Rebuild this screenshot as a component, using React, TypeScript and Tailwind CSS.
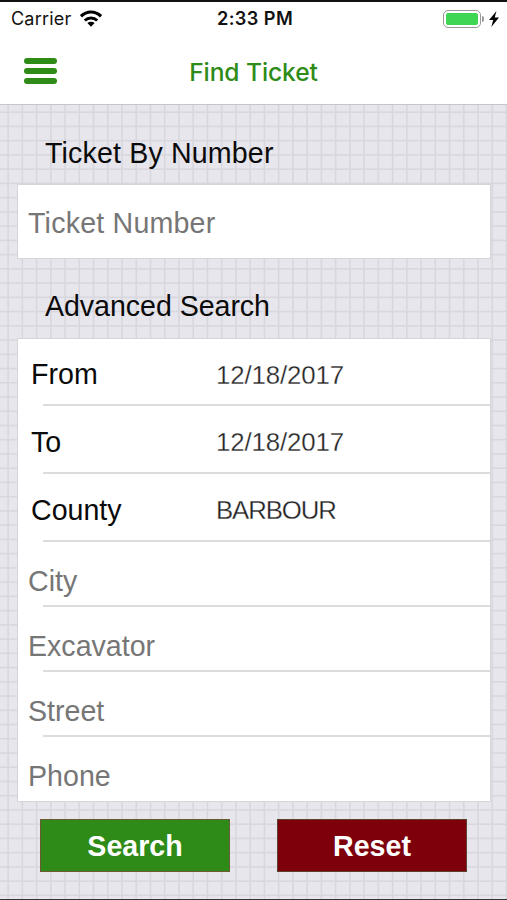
const pickers = [
  { label: 'From', value: '12/18/2017', height: 'h-[67px]', tracking: 'tracking-[-0.1px]' },
  { label: 'To', value: '12/18/2017', height: 'h-[68px]', tracking: 'tracking-[-0.1px]' },
  { label: 'County', value: 'BARBOUR', height: 'h-[68px]', tracking: 'tracking-[-1.1px]' },
]

const fields = [
  { label: 'City', height: 'h-[65px]' },
  { label: 'Excavator', height: 'h-[65px]' },
  { label: 'Street', height: 'h-[65px]' },
  { label: 'Phone', height: 'h-[64px]' },
]

const divider =
  "relative after:absolute after:bottom-0 after:right-0 after:left-[25px] after:h-[2px] after:bg-[#dcdcde] after:content-[''] last:after:hidden"

function StatusBar() {
  return (
    <div className="grid h-[33px] grid-cols-3 items-center pr-2 pl-[11px] font-[Inter,sans-serif] text-[#111]">
      <div className="flex items-center gap-[9px]">
        <span className="text-[18px] tracking-[0.2px]">Carrier</span>
        <svg width="22" height="17" viewBox="0 0 23 17" fill="none" stroke="#000" strokeWidth="3.2">
          <path d="M1 6.2C7 .3 16 .3 22 6.2" />
          <path d="M5 10.6c3.8-3.6 9.2-3.6 13 0" />
          <path d="M11.5 17 7.7 13.2c2.1-1.8 5.5-1.8 7.6 0z" fill="#000" stroke="none" />
        </svg>
      </div>
      <span className="text-center text-[18.2px] font-semibold tracking-[0.4px] whitespace-nowrap">2:33 PM</span>
      <div className="flex items-center justify-end">
        <div className="h-[18px] w-[38px] rounded-[5px] border-[1.5px] border-[#999] p-[2px]">
          <div className="h-full rounded-[2px] bg-[#3fd653]" />
        </div>
        <div className="ml-px h-[6px] w-[2px] rounded-r-full bg-[#999]" />
        <svg className="ml-[5px]" width="10" height="16" viewBox="0 0 10 16">
          <path d="M7.5 0 0 9h4.2L2.3 16 10 6.5H5.7z" fill="#000" />
        </svg>
      </div>
    </div>
  )
}

function Header() {
  return (
    <div className="grid flex-1 grid-cols-[1fr_auto_1fr] items-center pt-[3px]">
      <button className="ml-6 flex w-[33px] flex-col gap-[4px]" aria-label="Menu">
        <span className="h-[6px] w-full rounded-full bg-[#2f8b17]" />
        <span className="h-[6px] w-full rounded-full bg-[#2f8b17]" />
        <span className="h-[6px] w-full rounded-full bg-[#2f8b17]" />
      </button>
      <h1 className="pt-[3px] font-[Inter,sans-serif] text-[24.6px] font-medium tracking-[-0.1px] text-[#2f8b17]">
        Find Ticket
      </h1>
    </div>
  )
}

export default function App() {
  return (
    <div className="flex h-[900px] w-[507px] flex-col overflow-hidden border-t-2 border-b border-t-[#111] border-b-[#333] bg-[#e7e6ed] font-['Liberation_Sans',Arial,sans-serif] text-[28.6px] leading-none text-[#0a0a0a]">
      <div className="flex h-[103px] shrink-0 flex-col border-b-[1.5px] border-[#c6c5ca] bg-white">
        <StatusBar />
        <Header />
      </div>

      <main className="flex-1 bg-[repeating-linear-gradient(90deg,transparent_0_6.8px,#d8d7de_7.8px_8.4px,transparent_9.4px_14.24px),repeating-linear-gradient(180deg,transparent_0_5.9px,#d8d7de_6.9px_7.5px,transparent_8.5px_14.24px)] pl-[17px] pr-[16px]">
        <h2 className="flex h-[79px] items-center pt-[17px] pl-[28px] tracking-[0.15px]">Ticket By Number</h2>
        <div className="flex h-[75px] items-center border-[1.5px] border-[#d6d5da] bg-white pt-[4px] pl-[10px] tracking-[0.2px] text-[#767676]">
          Ticket Number
        </div>

        <h2 className="flex h-[79px] items-center pt-[16px] pl-[28px] tracking-[-0.05px]">Advanced Search</h2>
        <div className="border-[1.5px] border-[#d6d5da] bg-white">
          {pickers.map((row) => (
            <div key={row.label} className={`${divider} ${row.height} flex items-center pt-[4px] pl-[13px]`}>
              <span className="w-[185px]">{row.label}</span>
              <span
                className={`${row.tracking} pt-[2px] text-[25.8px] text-[#222] [-webkit-text-stroke:0.3px_white]`}
              >
                {row.value}
              </span>
            </div>
          ))}
          {fields.map((row) => (
            <div key={row.label} className={`${divider} ${row.height} flex items-center pt-[14px] pl-[10px] text-[#767676]`}>
              {row.label}
            </div>
          ))}
        </div>

        <div className="mt-[17px] flex justify-between pr-[24px] pl-[23px] text-[28.6px] font-bold text-white">
          <button className="h-[53px] w-[190px] border border-[#6b5a35] bg-[#2f8b17] pt-[2px]">Search</button>
          <button className="h-[53px] w-[190px] border border-[#5d4030] bg-[#7e000b] pt-[2px]">Reset</button>
        </div>
      </main>
    </div>
  )
}
